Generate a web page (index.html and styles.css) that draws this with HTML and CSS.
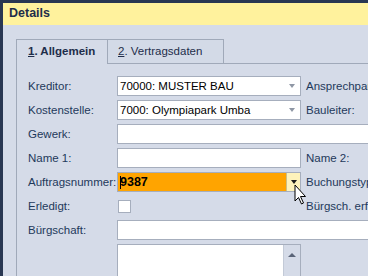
FILE: index.html
```html
<!DOCTYPE html>
<html>
<head>
<meta charset="utf-8">
<link rel="stylesheet" href="styles.css">
</head>
<body>
<div class="window">
  <div class="title">Details</div>
  <div class="content">
    <div class="tabs">
      <div class="tab active"><u>1</u>. Allgemein</div>
      <div class="tab"><u>2</u>. Vertragsdaten</div>
      <div class="tab-rest"></div>
    </div>
    <div class="panel">
      <div class="form">
        <div class="label">Kreditor:</div>
        <div class="input combo"><span class="val">70000: MUSTER BAU</span><span class="arrow"></span></div>
        <div class="rlabel">Ansprechpart</div>

        <div class="label">Kostenstelle:</div>
        <div class="input combo"><span class="val">7000: Olympiapark Umba</span><span class="arrow"></span></div>
        <div class="rlabel">Bauleiter:</div>

        <div class="label">Gewerk:</div>
        <div class="input wide"></div>

        <div class="label">Name 1:</div>
        <div class="input"></div>
        <div class="rlabel">Name 2:</div>

        <div class="label">Auftragsnummer:</div>
        <div class="input focus"><span class="val bold"><span class="caret"></span>9387</span><span class="btn"><span class="arrow dark"></span></span></div>
        <div class="rlabel">Buchungstyp</div>

        <div class="label">Erledigt:</div>
        <div class="checkcell"><span class="check"></span></div>
        <div class="rlabel">Bürgsch. erf.</div>

        <div class="label">Bürgschaft:</div>
        <div class="input wide"></div>

        <div class="label"></div>
        <div class="memo"><div class="scroll"><span class="up"></span></div></div>
        <div></div>
      </div>
    </div>
  </div>
  <svg class="cursor" width="14" height="22" viewBox="0 0 14 22">
    <path d="M1 1 L1 17 L4.5 13.5 L7.5 20 L9.5 19 L6.5 12.5 L11.5 12.5 Z" fill="#fff" stroke="#000" stroke-width="1" stroke-linejoin="miter"/>
  </svg>
</div>
</body>
</html>
```
FILE: styles.css
```css
* { box-sizing: border-box; }
html, body { margin: 0; padding: 0; }
body {
  width: 368px;
  height: 276px;
  overflow: hidden;
  background: #d5dbe8;
  font-family: "Liberation Sans", Arial, sans-serif;
  font-size: 11.5px;
  color: #1e395b;
}
.window {
  position: relative;
  width: 368px;
  height: 276px;
  overflow: hidden;
  border-top: 3px solid #293752;
  border-left: 3px solid #293752;
  background: #d5dbe8;
}
.title {
  height: 22px;
  background: #fff29d;
  font-weight: bold;
  font-size: 12.5px;
  line-height: 20px;
  padding-left: 6px;
  color: #1e2d4a;
}
.content {
  padding: 14px 0 0 13px;
}
.tabs {
  display: flex;
  height: 25px;
}
.tab {
  height: 25px;
  border: 1px solid #a0a9b9;
  border-bottom: none;
  padding: 0 11px;
  line-height: 23px;
  font-size: 11.5px;
  color: #1e2d4a;
  background: #d3dae7;
  white-space: nowrap;
}
.tab u { text-decoration: underline; }
.tab.active {
  width: 92px;
  font-weight: bold;
  background: #d5dbe8;
}
.tab:not(.active) {
  width: 116px;
  border-left: none;
  border-bottom: 1px solid #a0a9b9;
  padding-left: 10px;
}
.tab-rest {
  flex: 1;
  border-bottom: 1px solid #a0a9b9;
}
.panel {
  border-left: 1px solid #a0a9b9;
  padding: 12px 0 0 11px;
  height: 220px;
}
.form {
  display: grid;
  grid-template-columns: 89px 184px 5px 80px;
  grid-auto-rows: 20px;
  row-gap: 4px;
  align-items: center;
}
.label {
  grid-column: 1;
  line-height: 20px;
  white-space: nowrap;
}
.rlabel {
  grid-column: 4;
  white-space: nowrap;
  line-height: 20px;
}
.input {
  grid-column: 2;
  height: 20px;
  background: #fff;
  border: 1px solid #a6aebd;
  display: flex;
  align-items: center;
  position: relative;
  color: #000;
}
.input.wide { grid-column: 2 / 5; }
.val {
  flex: 1;
  padding-left: 2px;
  white-space: nowrap;
  overflow: hidden;
}
.val.bold { font-weight: bold; font-size: 12.5px; display: flex; align-items: center; }
.caret {
  display: inline-block;
  width: 1px;
  height: 13px;
  background: #000;
  margin-right: -1px;
}
.arrow {
  width: 0;
  height: 0;
  border-left: 3.5px solid transparent;
  border-right: 3.5px solid transparent;
  border-top: 4px solid #8f97a5;
  margin: 0 5px 0 4px;
}
.arrow.dark { border-top-color: #1b1b1b; margin: 0; }
.input.focus {
  background: #ffa400;
}
.btn {
  width: 14px;
  height: 18px;
  background: #fdf2bb;
  border-left: 1px solid #cbbf86;
  display: flex;
  align-items: center;
  justify-content: center;
}
.checkcell { grid-column: 2; display: flex; align-items: center; }
.check {
  width: 13px;
  height: 13px;
  margin-left: 1px;
  background: #fff;
  border: 1px solid #a6aebd;
}
.memo {
  grid-column: 2;
  height: 40px;
  align-self: start;
  background: #fff;
  border: 1px solid #a6aebd;
  display: flex;
  justify-content: flex-end;
}
.scroll {
  width: 17px;
  background: #d5dbe8;
  border-left: 1px solid #c3cad7;
  display: flex;
  justify-content: center;
  padding-top: 8px;
}
.up {
  width: 0;
  height: 0;
  border-left: 4px solid transparent;
  border-right: 4px solid transparent;
  border-bottom: 4px solid #5a6478;
}
.cursor {
  position: absolute;
  left: 291px;
  top: 181px;
}
```
